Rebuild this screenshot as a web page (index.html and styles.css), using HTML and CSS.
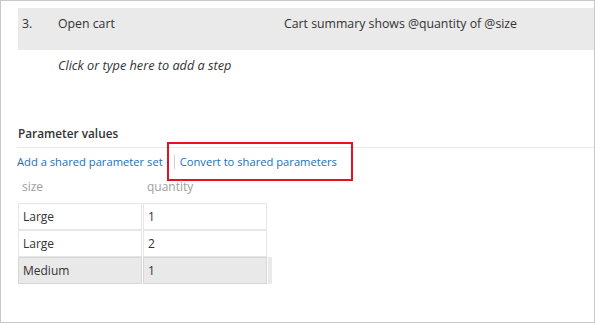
FILE: index.html
```html
<!DOCTYPE html>
<html>
<head>
<meta charset="utf-8">
<link rel="stylesheet" href="styles.css">
</head>
<body>
<div class="frame">
  <div class="step-row">
    <span class="step-num">3.</span>
    <span class="step-action">Open cart</span>
    <span class="step-expected">Cart summary shows @quantity of @size</span>
  </div>
  <div class="add-step">Click or type here to add a step</div>

  <div class="params">
    <div class="params-title">Parameter values</div>
    <div class="params-links">
      <a class="link">Add a shared parameter set</a>
      <span class="divider"></span>
      <span class="highlight"><a class="link">Convert to shared parameters</a></span>
    </div>
    <div class="param-table">
      <div class="col-head">size</div>
      <div class="col-head">quantity</div>
      <div class="row">
        <div class="cell">Large</div>
        <div class="cell">1</div>
      </div>
      <div class="row">
        <div class="cell">Large</div>
        <div class="cell">2</div>
      </div>
      <div class="row row-selected">
        <div class="cell">Medium</div>
        <div class="cell">1</div>
      </div>
    </div>
  </div>
</div>
</body>
</html>
```
FILE: styles.css
```css
html, body {
  margin: 0;
  padding: 0;
  background: #ffffff;
}
body {
  font-family: "Open Sans", "Noto Sans", sans-serif;
  font-size: 12px;
  line-height: 16px;
  color: #333333;
}
.frame {
  box-sizing: border-box;
  width: 595px;
  height: 323px;
  border: 1px solid #c8c8c8;
  padding: 7px 0 0 17px;
  overflow: hidden;
}
.step-row {
  display: flex;
  align-items: flex-start;
  height: 42px;
  background: #eaeaea;
  margin-right: -1px;
  padding-top: 8px;
  box-sizing: border-box;
  font-size: 12.3px;
}
.step-num {
  width: 40px;
  padding-left: 4px;
  box-sizing: border-box;
}
.step-action {
  width: 226px;
}
.add-step {
  font-style: italic;
  font-size: 12.7px;
  padding: 7px 0 0 40px;
  height: 16px;
}
.params {
  margin-top: 52px;
}
.params-title {
  font-weight: 600;
  font-size: 11.8px;
  padding-left: 1px;
  height: 22px;
  border-bottom: 1px solid #e8e8e8;
  margin-left: -1px;
}
.params-links {
  display: flex;
  align-items: center;
  height: 27px;
  margin-left: -1px;
  font-size: 11.2px;
}
.link {
  color: #1a6fb8;
  text-decoration: none;
}
.divider {
  width: 1px;
  height: 14px;
  background: #cfcfcf;
  margin: 0 5px 0 11px;
}
.highlight {
  position: relative;
  display: inline-block;
  line-height: 16px;
}
.highlight::after {
  content: "";
  position: absolute;
  left: -13px;
  right: -16px;
  top: -12px;
  bottom: -11px;
  border: 2px solid #e81123;
}
.param-table {
  display: grid;
  grid-template-columns: 125px 125px 4px;
}
.col-head {
  color: #a0a0a0;
  padding: 4px 0 0 4px;
  height: 24px;
}
.col-head:nth-child(2) {
  grid-column: 2 / 4;
}
.row {
  display: contents;
}
.cell {
  height: 27px;
  line-height: 25px;
  border: 1px solid #e6e6e6;
  box-sizing: border-box;
  padding-left: 4px;
  margin-right: 1px;
}
.row-selected .cell {
  background: #e9e9e9;
  border-color: #d6d6d6;
}
.row:not(.row-selected)::after {
  content: "";
}
.row-selected::after {
  content: "";
  background: #e9e9e9;
}
```
